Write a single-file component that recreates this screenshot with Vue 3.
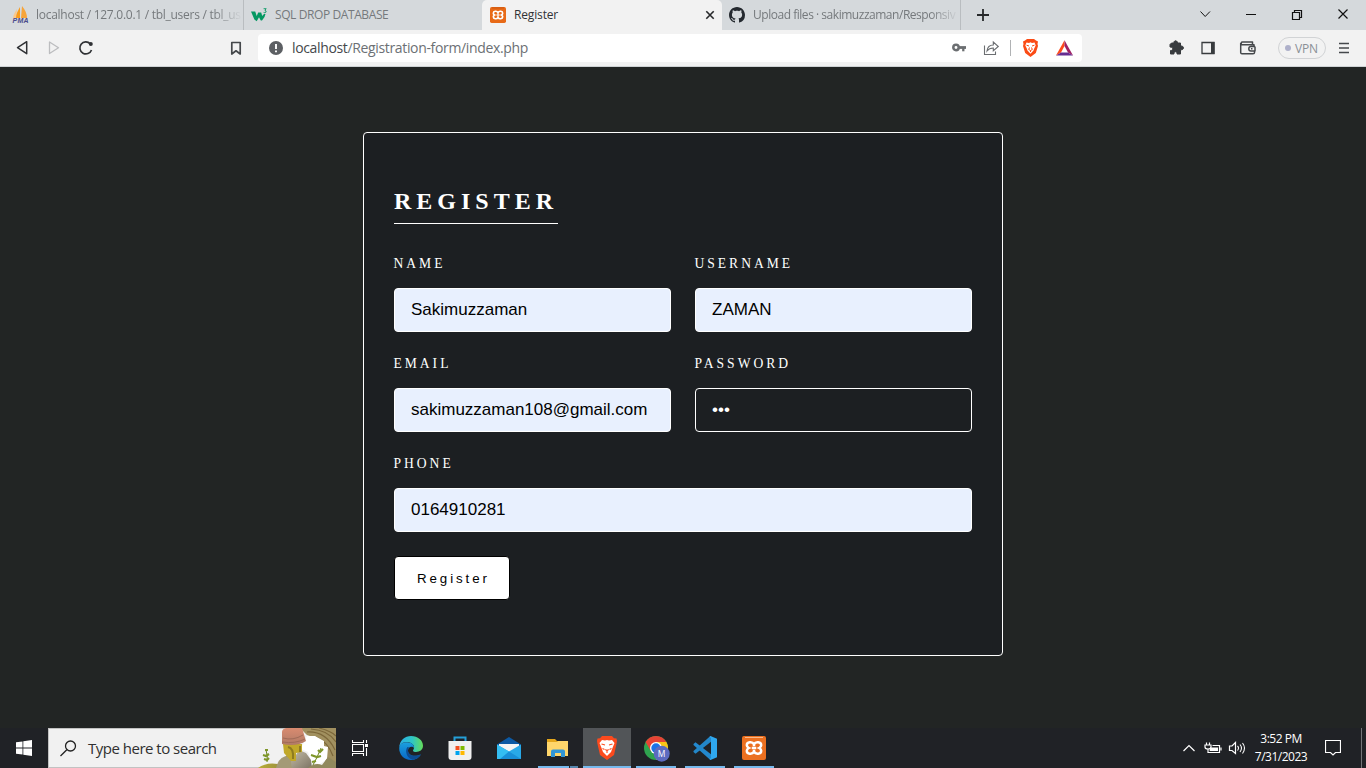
<script setup>
import { ref } from 'vue'

const fields = ref([
  { label: 'Name', value: 'Sakimuzzaman', filled: true },
  { label: 'Username', value: 'ZAMAN', filled: true },
  { label: 'Email', value: 'sakimuzzaman108@gmail.com', filled: true },
  { label: 'Password', value: '•••', filled: false },
  { label: 'Phone', value: '0164910281', filled: true, wide: true },
])
</script>

<template>
  <div class="screen">
    <header class="tabs">
      <div class="tab first">
        <svg class="fav" width="18" height="18" viewBox="0 0 18 18">
          <path d="M8 1 Q4 8 3 12 L8 12Z" fill="#f89c1c" />
          <path d="M10 0 Q15 6 15 12 L9 12Z" fill="#f6a43a" />
          <path d="M5 3 Q1 9 1 12 L4 12Z" fill="#fbc88a" />
          <text x="0.5" y="16.8" class="pma" textLength="16">PMA</text>
        </svg>
        <span class="tab-text t1">localhost / 127.0.0.1 / tbl_users / tbl_us</span>
      </div>
      <div class="tab second">
        <svg class="fav" width="17" height="14" viewBox="0 0 17 14">
          <path d="M0 3.500H4.200L5.700 8 7.200 4.500H10.200L11.200 8 13 6H14.500Q14 9.500 11 12.500L9.800 12.500 8 9.200 5.700 13.200 3.400 11.500Z" fill="#059862" />
          <path d="M12.600 0.700H15.200L13.900 2.300Q15.800 2.800 14.900 4.200 13.900 5.200 12.600 4.400" fill="none" stroke="#059862" stroke-width="0.900" />
        </svg>
        <span class="tab-text t2">SQL DROP DATABASE</span>
      </div>
      <div class="tab active">
        <svg class="fav" width="16" height="16" viewBox="0 0 24 24">
          <rect width="24" height="24" rx="2.5" fill="#e86a17" />
          <path d="M3 1.400H21" stroke="#bd4d0c" stroke-width="1" />
          <path d="M12 8.300C10.300 5.300 5 5.800 5 9.300C5 10.800 5.800 11.500 6.800 12C5.800 12.500 5 13.200 5 14.700C5 18.200 10.300 18.700 12 15.700C13.700 18.700 19 18.200 19 14.700C19 13.200 18.200 12.500 17.200 12C18.200 11.500 19 10.800 19 9.300C19 5.800 13.700 5.300 12 8.300ZM12 8.300V10M12 15.700V14M9.800 12H14.200" fill="none" stroke="#fff" stroke-width="2.500" />
        </svg>
        <span class="tab-text t3">Register</span>
        <svg class="tab-close" width="10" height="10" viewBox="0 0 10 10"><path d="M1.300 1.300L8.700 8.700M8.700 1.300L1.300 8.700" stroke="#27292b" stroke-width="1.600" /></svg>
      </div>
      <div class="tab fourth">
        <svg class="fav" width="16" height="16" viewBox="0 0 16 16"><path fill="#24292f" d="M8 0C3.58 0 0 3.58 0 8c0 3.54 2.29 6.53 5.47 7.59.4.07.55-.17.55-.38 0-.19-.01-.82-.01-1.49-2.01.37-2.53-.49-2.69-.94-.09-.23-.48-.94-.82-1.13-.28-.15-.68-.52-.01-.53.63-.01 1.08.58 1.23.82.72 1.21 1.87.87 2.33.66.07-.52.28-.87.51-1.07-1.78-.2-3.64-.89-3.64-3.95 0-.87.31-1.59.82-2.15-.08-.2-.36-1.02.08-2.12 0 0 .67-.21 2.2.82.64-.18 1.32-.27 2-.27s1.36.09 2 .27c1.53-1.04 2.2-.82 2.2-.82.44 1.1.16 1.92.08 2.12.51.56.82 1.27.82 2.15 0 3.07-1.87 3.75-3.65 3.95.29.25.54.73.54 1.48 0 1.07-.01 1.93-.01 2.2 0 .21.15.46.55.38A8.01 8.01 0 0 0 16 8c0-4.42-3.58-8-8-8z" /></svg>
        <span class="tab-text t4">Upload files · sakimuzzaman/Responsiv</span>
      </div>
      <svg class="plus" width="12" height="12" viewBox="0 0 12 12"><path d="M6 0V12M0 6H12" stroke="#27292b" stroke-width="1.800" /></svg>
      <svg class="win-controls" width="152" height="16" viewBox="0 0 152 16" fill="none" stroke="#111" stroke-width="1">
        <path d="M0.500 4.500L5.200 9.500 10 4.500" />
        <path d="M46 7.500H56" />
        <path d="M92.500 5.500H99.500V12.500H92.500ZM94.500 5V3.500H101.500V10.500H100" stroke-width="1.200" />
        <path d="M138.500 2.500L147.500 11.500M147.500 2.500L138.500 11.500" stroke-width="1.200" />
      </svg>
    </header>

    <div class="toolbar">
      <svg class="nav" width="82" height="18" viewBox="0 0 82 18" fill="none" stroke-width="1.500" stroke-linejoin="round">
        <path d="M10.700 2.700V14.700L1.500 8.700Z" stroke="#303235" />
        <path d="M33.500 3V14.500L42.500 8.700Z" stroke="#bcbdbf" stroke-width="1.300" />
        <path d="M75.500 11A6 6 0 1 1 74.200 4.800" stroke="#303235" stroke-width="1.700" />
        <circle cx="74.800" cy="5" r="2" fill="#303235" />
      </svg>
      <svg class="bookmark" width="12" height="15" viewBox="0 0 12 15"><path d="M1.800 1.500H10.200V13L6 9.800 1.800 13Z" fill="none" stroke="#45484b" stroke-width="1.700" stroke-linejoin="round" /></svg>
      <div class="address">
        <svg class="info" width="14" height="14" viewBox="0 0 14 14"><circle cx="7" cy="7" r="7" fill="#5c5f63" /><path d="M7 3V8M7 9.500V11.300" stroke="#fff" stroke-width="1.900" /></svg>
        <span class="url"><b>localhost</b>/Registration-form/index.php</span>
        <svg class="addr-icons" width="126" height="20" viewBox="0 0 126 20">
          <g fill="none" stroke="#6b6e71">
            <circle cx="5" cy="9.500" r="2.700" stroke-width="2.500" />
            <path d="M8 9.500H15" stroke-width="2.800" /><path d="M12.300 10V13.300" stroke-width="2.300" />
            <path d="M33.500 7.500V16.500H44.500V13.500M36 13C36.500 8.500 39 7 42.300 7V4L47.300 8.500 42.300 12.700V10C39.500 10 37.500 11 36 13Z" stroke-width="1.100" />
          </g>
          <path d="M59.500 2V18" stroke="#b0b2b4" />
          <path d="M74 2.500L76 1H83L85 2.500 87 3.500 86.500 6 87 8 84.800 15 79.500 19 74.200 15 72 8 72.500 6 72 3.500Z" fill="#fb4b15" />
          <path d="M75.500 4.500L78 5 79.500 4.300 81 5 83.500 4.500 84.700 7.500 83.200 10.500 82.500 12.500 79.500 15.800 76.500 12.500 75.800 10.500 74.300 7.500Z" fill="#fff" />
          <path d="M75.500 7.200L78 8M83.500 7.200L81 8M78.500 9.500L77.700 11.500 79.500 12.500 81.300 11.500 80.500 9.500M79.500 12.500V14" stroke="#fb4b15" stroke-width="1" fill="none" />
          <path d="M113.500 2.300L105 17.500 110 14.500 113.500 8Z" fill="#ff4a1c" />
          <path d="M113.500 2.300L122 17.500 117 14.500 113.500 8Z" fill="#9e1f63" />
          <path d="M105 17.500H122L117 14.500H110Z" fill="#662d91" />
        </svg>
      </div>
      <svg class="ext" width="90" height="18" viewBox="0 0 90 18">
        <path d="M3.500 4H6C5.400 1 9.600 1 9.500 4H12.500V7C16.500 6.500 16.500 11.200 12.500 10.800V15H9C9.500 12 5.500 12 6 15H2.500V11.500C5.500 11.800 5.500 7.800 2 8V5.500Z" fill="#383b3e" stroke="#383b3e" stroke-linejoin="round" />
        <path d="M34 3.500H46V14.500H34Z" fill="none" stroke="#383b3e" stroke-width="1.300" /><path d="M43 3H46.500V15H43Z" fill="#383b3e" />
        <g fill="none" stroke="#45484b" stroke-width="1.500" stroke-linejoin="round"><path d="M86 7V5.700H73.500Q72.500 3 74.500 3H84.500V5.500M72.700 4V13.500Q72.700 14.800 74 14.800H85Q86.500 14.800 86.500 13.500V12M87 7.500H83Q80.800 7.500 80.800 9.700T83 12H87V7.500" /><path d="M83 9.800H84.500" /></g>
      </svg>
      <div class="vpn"><i></i><span>VPN</span></div>
      <svg class="menu" width="10" height="12" viewBox="0 0 10 12"><path d="M0 1.500H10M0 6H10M0 10.500H10" stroke="#45484b" stroke-width="1.700" /></svg>
    </div>

    <main class="page">
      <form class="card" @submit.prevent>
        <h2>Register</h2>
        <div class="grid">
          <div v-for="f in fields" :key="f.label" class="field" :class="{ wide: f.wide }">
            <label>{{ f.label }}</label>
            <div class="input" :class="{ filled: f.filled }">{{ f.value }}</div>
          </div>
        </div>
        <button type="submit">Register</button>
      </form>
    </main>

    <footer class="taskbar">
      <div class="start"><svg width="16" height="16" viewBox="0 0 16 16" fill="#fff"><path d="M0 2.300L6.500 1.400V7.600H0ZM7.300 1.300L16 0V7.600H7.300ZM0 8.400H6.500V14.600L0 13.700ZM7.300 8.400H16V16L7.300 14.700Z" /></svg></div>
      <div class="search">
        <svg class="lens" width="17" height="17" viewBox="0 0 17 17" fill="none" stroke="#222" stroke-width="1.300"><circle cx="10.500" cy="6" r="5" /><path d="M6.800 9.700L0.500 16" /></svg>
        <span>Type here to search</span>
        <svg class="art" width="78" height="40" viewBox="0 0 78 40">
          <defs>
            <linearGradient id="gold" x1="0" x2="1"><stop offset="0" stop-color="#b9ad35" /><stop offset="1" stop-color="#857c46" /></linearGradient>
            <linearGradient id="stone" x1="0" x2="1" y2="1"><stop offset="0" stop-color="#c4bda8" /><stop offset="1" stop-color="#7d7464" /></linearGradient>
            <linearGradient id="clay" y2="1" x2="0"><stop offset="0" stop-color="#d98b70" /><stop offset="1" stop-color="#b07a66" /></linearGradient>
          </defs>
          <path d="M42 0H78V40H66Q72 22 60 11L49 7Z" fill="#a1905f" />
          <path d="M49 4Q68 3 77 22M53 1Q70 2 78 14M58 9Q70 14 75 28M61 0Q73 3 78 8" fill="none" stroke="#7c673a" stroke-width="1.200" />
          <path d="M44 18L49 8 57 8 66 13 66 18 70 19 69 31 62 36 54 35 50 24 43 21Z" fill="#fff" />
          <path d="M0 40Q8 34 20 36L30 26 40 40Z" fill="url(#gold)" />
          <path d="M18 40Q21 28 30 28L40 40Z" fill="#a49a76" />
          <path d="M34 40Q31 29 38 27L41 22 48 25 53 32 54 40Z" fill="url(#stone)" />
          <path d="M50 40Q57 34 64 37L70 29 78 34V40Z" fill="#91895d" />
          <path d="M25 16H44L44 24 38 25V33L33 33 26 25Z" fill="#c1a82a" />
          <path d="M30 19Q36 20 35 31M42 18V24" fill="none" stroke="#8e7b21" stroke-width="2" />
          <path d="M24 4Q24 1 28 0H44L48 13Q39 19 24 16Z" fill="url(#clay)" />
          <path d="M25 10Q35 13 45 7M24 14Q37 16 47 11" fill="none" stroke="#a06b58" />
          <path d="M9 34Q10 28 8 22M55 37Q59 30 63 20" fill="none" stroke="#6d8320" />
          <path d="M7 22H10M5 27L8 28 11 26M6 31L9 32 11 30M53 27L59 29 63 28M54 34L58 33M60 22L62 24 65 21" fill="none" stroke="#7f972a" stroke-width="2.200" />
        </svg>
      </div>
      <svg class="taskview" width="17" height="16" viewBox="0 0 17 16" fill="none" stroke="#fff"><path d="M0.500 0V2.500H11.500V0M0.500 16V13.500H11.500V16M0.500 4.500H11.500V11.500H0.500ZM14.500 0V3M14.500 8V16" stroke-width="1.100" /><path d="M13 4H16V7H13Z" fill="#fff" stroke="none" /></svg>
      <nav class="apps">
        <div class="app">
          <svg width="24" height="24" viewBox="0 0 24 24">
            <defs><linearGradient id="edgeTop"><stop stop-color="#2aaee8" /><stop offset="0.550" stop-color="#2fc5c4" /><stop offset="1" stop-color="#65dc59" /></linearGradient><linearGradient id="edgeBody" x2="0" y2="1"><stop stop-color="#1ba0df" /><stop offset="1" stop-color="#0967c6" /></linearGradient></defs>
            <path d="M0.200 12C0.500 4 6 0 12 0C19 0 24 4.500 24 9.800C24 14 20.500 16 17 16C14 16 13.500 14.700 14.500 13.500C17 9.500 12 6 7.500 6C4 6 1.200 8 .2 12Z" fill="url(#edgeTop)" />
            <path d="M.2 12C1 7.500 4.500 6 8 6.200C12.500 6.300 15.500 9 15 12C13.500 9.800 9 10.500 9 14.500C9 19 14.500 21.500 21.800 18.500C19.500 22.500 16 24 12 24C5 24 0 18.500 .2 12Z" fill="url(#edgeBody)" />
            <path d="M8.500 11C5.500 14.500 7.500 22 13.500 23.800C17 23.500 20 21.500 21.800 18.500C14.500 21.500 9 19 9 14.500Q9 12.500 10 11.300Z" fill="#0c4c93" />
          </svg>
        </div>
        <div class="app">
          <svg width="24" height="24" viewBox="0 0 24 24"><path d="M6.500 6V1.500H17.500V6" fill="none" stroke="#249fd8" stroke-width="2" /><path d="M.5 5H23.500V21Q23.500 24 20.500 24H3.500Q.5 24 .5 21Z" fill="#f0f0f0" /><path d="M7.500 10H11.500V14H7.500Z" fill="#f25022" /><path d="M12.500 10H16.500V14H12.500Z" fill="#7fba00" /><path d="M7.500 15H11.500V19H7.500Z" fill="#00a4ef" /><path d="M12.500 15H16.500V19H12.500Z" fill="#ffb900" /></svg>
        </div>
        <div class="app">
          <svg width="24" height="24" viewBox="0 0 24 24"><path d="M0 8.500L12 1 24 8.500V12H0Z" fill="#0c59a4" /><path d="M2 8H22V16H2Z" fill="#f4f4f4" /><path d="M0 8.500L12 15.500 24 8.500V23H0Z" fill="#29a9e8" /><path d="M0 8.500L12 15.500 5 23H0Z" fill="#34bdf2" /><path d="M12 15.500L24 23H3Z" fill="#198fd8" /></svg>
        </div>
        <div class="app">
          <svg width="24" height="24" viewBox="0 0 24 24"><path d="M1 3H9L11 5H22V20H1Z" fill="#e5a71c" /><path d="M1 6H11L12 5H22V20H1Z" fill="#ffd66b" /><path d="M5 21V15.500Q5 13.500 7 13.500H17Q19 13.500 19 15.500V21H15V17H9V21Z" fill="#3296d5" /></svg>
          <div class="run split"><i></i><i></i></div>
        </div>
        <div class="app current">
          <svg width="24" height="24" viewBox="0 0 24 24"><path d="M7 0H17L19 2.200 21.500 2.500 22 5 21.500 8 19 19 12 24 5 19 2.500 8 2 5 2.500 2.500 5 2.200Z" fill="#fb4a1d" /><path d="M7 4L10 4.600 12 4 14 4.600 17 4 19.500 7 17.500 12 16 16 12 20 8 16 6.500 12 4.500 7Z" fill="#fff" /><path d="M6.500 8L10 9M17.500 8L14 9M7.500 12.500L9.500 13.500M16.500 12.500L14.500 13.500M10.300 13.500L12 14.500 13.700 13.500M12 14.500V17" fill="none" stroke="#fb4a1d" stroke-width="1.100" /></svg>
          <div class="run full"></div>
        </div>
        <div class="app">
          <svg width="28" height="28" viewBox="0 0 28 28"><circle cx="14" cy="14" r="12" fill="#2fa34f" /><path d="M14 14L3.600 8A12 12 0 0 1 24.400 8H14Z" fill="#e64335" /><path d="M24.400 8A12 12 0 0 1 14 26L19.200 17 14 8Z" fill="#fac417" /><path d="M3.600 8L8.800 17 14 8Z" fill="#e64335" /><circle cx="14" cy="14" r="6" fill="#fff" /><circle cx="14" cy="14" r="4.700" fill="#1b73e8" /><circle cx="19.700" cy="19.700" r="8" fill="#5c6bc0" /><text x="19.700" y="22.700" class="m" text-anchor="middle">M</text></svg>
          <div class="run"></div>
        </div>
        <div class="app">
          <svg width="24" height="24" viewBox="0 0 24 24"><path d="M0.500 8L2.500 6.300 18 18.200V24L16.500 23.200.5 9Z" fill="#2389cf" /><path d="M.5 16L2.500 17.700 18 5.800V0L16.500.8.5 15Z" fill="#2387c9" /><path d="M17.500 0L24 2.800V21.200L17.500 24 16.500 23 18 22V2L16.500 1Z" fill="#2fa8ef" /></svg>
          <div class="run"></div>
        </div>
        <div class="app">
          <svg width="24" height="24" viewBox="0 0 24 24"><rect width="24" height="24" rx="2" fill="#eb7020" /><path d="M3 1.500H21" stroke="#f7b98c" /><path d="M12 8.300C10.300 5.300 4.800 5.800 4.800 9.300C4.800 10.800 5.800 11.500 6.800 12C5.800 12.500 4.800 13.200 4.800 14.700C4.800 18.200 10.300 18.700 12 15.700C13.700 18.700 19.200 18.200 19.200 14.700C19.200 13.200 18.200 12.500 17.200 12C18.200 11.500 19.200 10.800 19.200 9.300C19.200 5.800 13.700 5.300 12 8.300ZM12 8.300V10M12 15.700V14M9.800 12H14.200" fill="none" stroke="#fff" stroke-width="2.500" /></svg>
          <div class="run"></div>
        </div>
      </nav>
      <svg class="tray" width="64" height="16" viewBox="0 0 64 16" fill="none" stroke="#fff" stroke-width="1.200">
        <path d="M1.500 11L7 5.500 12.500 11" />
        <path d="M24.500 2.500V5M27.500 2.500V5M23 5H29V7Q29 9 26 9 23 9 23 7ZM26 9V12.500H37.500V5.500H30.500M39 7.500V10.500" /><path d="M28.500 7.500H36V11H27.500Z" fill="#fff" stroke="none" />
        <path d="M47.500 6H50L53.500 2.500V13.500L50 10.500H47.500Z" /><path d="M55.500 6Q57.500 8 55.500 10.500M58 4.500Q61 8 58 12M60.500 3Q64.500 8 60.500 13.500" stroke-width="1.100" />
      </svg>
      <div class="clock"><span>3:52 PM</span><span>7/31/2023</span></div>
      <svg class="notice" width="16" height="16" viewBox="0 0 16 16"><path d="M.5 .5H15.500V12.500H10.500L8 15 5.500 12.500H.5Z" fill="none" stroke="#fff" stroke-width="1.200" /></svg>
      <div class="peek"></div>
    </footer>
  </div>
</template>

<style>
body { margin: 0; overflow: hidden; }
</style>

<style scoped>
* { box-sizing: border-box; }
svg { display: block; flex: none; }
.screen { width: 1366px; height: 768px; display: flex; flex-direction: column; font-family: "Open Sans", "Noto Sans", sans-serif; overflow: hidden; }
.tabs { height: 30px; display: flex; background: #d5d9dc; align-items: center; }
.tab { height: 30px; display: flex; align-items: center; }
.tab-text { font-size: 12px; line-height: 16px; white-space: nowrap; color: #75797c; }
.first { width: 244px; padding-left: 12px; gap: 6px; border-right: 1px solid #b9bdc0; }
.second { width: 238px; padding-left: 7px; gap: 7px; }
.active { width: 240px; padding: 0 7px 0 8px; gap: 8px; background: #f2f2f2; border-radius: 5px 5px 0 0; }
.active .tab-text { color: #303235; flex: 1; }
.fourth { width: 239px; padding-left: 7px; gap: 8px; border-right: 1px solid #b9bdc0; }
.t1, .t4 { width: 206px; -webkit-mask-image: linear-gradient(90deg, #000 86%, transparent 100%); mask-image: linear-gradient(90deg, #000 86%, transparent 100%); }
.t1 { letter-spacing: -0.27px; }
.t2 { letter-spacing: -0.4px; }
.t3 { letter-spacing: -0.15px; }
.t4 { letter-spacing: -0.47px; }
.pma { font: italic bold 7px "Liberation Sans", sans-serif; fill: #4a4b8a; }
.plus { margin-left: 16px; }
.win-controls { margin-left: auto; margin-right: 14px; }
.toolbar { height: 37px; display: flex; align-items: center; background: #f2f2f2; border-bottom: 1px solid #cfd3d5; }
.nav { margin-left: 16px; }
.bookmark { margin-left: 132px; }
.address { margin-left: 16px; width: 824px; height: 28px; border-radius: 4px; background: #fff; display: flex; align-items: center; padding: 0 5px 0 11px; }
.url { margin-left: 9px; font-size: 14px; line-height: 20px; letter-spacing: -0.35px; color: #6c7074; white-space: nowrap; }
.url b { font-weight: 400; color: #45484b; }
.addr-icons { margin-left: auto; }
.ext { margin-left: 86px; }
.vpn { margin-left: 20px; width: 48px; height: 22px; border: 1px solid #d1d3d5; border-radius: 11px; display: flex; align-items: center; padding-left: 6px; gap: 4px; font-size: 12px; color: #8a8f96; letter-spacing: -0.2px; }
.vpn i { width: 6px; height: 6px; border-radius: 50%; background: #aeb0ca; }
.menu { margin-left: 13px; }
.page { height: 661px; background: #222524; display: flex; justify-content: center; align-items: flex-start; padding-top: 65px; }
.card { width: 640px; height: 524px; border: 1px solid #fff; border-radius: 4px; background: #1c1f22; padding: 53px 30px 0; }
.card h2 { width: max-content; margin: 0 0 30px; height: 38px; font: bold 24px/30px "Liberation Serif", serif; letter-spacing: 5px; text-transform: uppercase; color: #fff; border-bottom: 1px solid #fff; }
.grid { display: grid; grid-template-columns: 277px 277px; column-gap: 24px; }
.field { height: 100px; }
.wide { grid-column: span 2; }
.field label { display: block; height: 34px; font: 13.6px/20px "Liberation Serif", serif; letter-spacing: 3px; text-transform: uppercase; color: #fff; margin-left: -0.6px; }
.input { height: 44px; border: 1px solid #fff; border-radius: 4px; padding: 0 16px; font: 17px/42px "Liberation Sans", sans-serif; color: #fff; white-space: nowrap; }
.filled { background: #e8f0fe; color: #000; }
button { display: block; margin-top: 2px; width: 116px; height: 44px; padding: 0 0 0 22px; text-align: left; border: 1px solid #000; border-radius: 4px; background: #fff; color: #000; font: 13.333px "Liberation Sans", sans-serif; letter-spacing: 2.9px; }
.taskbar { height: 40px; display: flex; align-items: center; background: #202226; color: #fff; }
.start { width: 48px; padding-left: 16px; }
.search { width: 288px; height: 40px; background: #f1f1f1; border: 1px solid #c2c2c2; border-right: 0; display: flex; align-items: center; padding-left: 11px; color: #303030; font-size: 15px; letter-spacing: -0.5px; }
.search span { margin-left: 11px; white-space: nowrap; }
.art { margin-left: auto; }
.taskview { margin-left: 16px; }
.apps { margin-left: 18px; display: flex; gap: 1px; }
.app { position: relative; width: 48px; height: 40px; display: flex; align-items: center; justify-content: center; }
.current { background: #525558; }
.run { position: absolute; left: 4px; bottom: 0; width: 40px; height: 2px; background: #76b9ed; }
.run.full { left: 0; width: 48px; }
.split { display: flex; gap: 1px; background: none; }
.split i { width: 31px; background: #76b9ed; }
.split i + i { width: 8px; background: #5586ad; }
.m { font: 8.5px "Open Sans", sans-serif; fill: #fff; }
.tray { margin-left: auto; }
.clock { width: 70px; display: flex; flex-direction: column; align-items: center; font-size: 12px; line-height: 18px; letter-spacing: -0.5px; }
.notice { margin-left: 9px; }
.peek { width: 1px; height: 40px; margin: 0 4px 0 20px; background: #737578; }
</style>
